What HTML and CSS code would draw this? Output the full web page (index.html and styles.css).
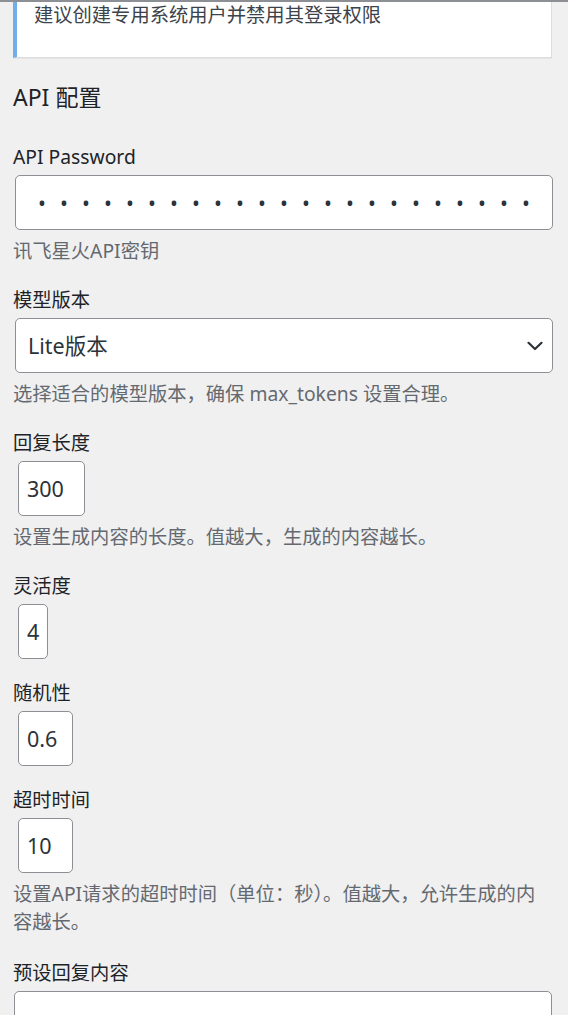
FILE: index.html
```html
<!DOCTYPE html>
<html lang="zh-CN">
<head>
<meta charset="utf-8">
<meta name="viewport" content="width=device-width, initial-scale=1">
<title>API 配置</title>
<link rel="stylesheet" href="styles.css">
</head>
<body>
<div class="topbar"></div>
<div class="wrap">
  <div class="notice"><p>建议创建专用系统用户并禁用其登录权限</p></div>
  <h2 class="section-title">API 配置</h2>
  <div class="fields">
    <div class="field">
      <label class="field-label" for="api-password">API Password</label>
      <input id="api-password" class="input input-full input-password" type="password" value="abcdefghijklmnopqrstuvw">
      <p class="description">讯飞星火API密钥</p>
    </div>
    <div class="field">
      <label class="field-label" for="model">模型版本</label>
      <div class="select-wrap">
        <select id="model" class="input select">
          <option>Lite版本</option>
        </select>
        <svg class="chevron" width="16" height="10" viewBox="0 0 16 10" aria-hidden="true"><polyline points="1.5,1.8 8,8 14.5,1.8" fill="none" stroke="#2c3338" stroke-width="2.2" stroke-linecap="round" stroke-linejoin="round"/></svg>
      </div>
      <p class="description">选择适合的模型版本，确保 max_tokens 设置合理。</p>
    </div>
    <div class="field">
      <label class="field-label" for="max-tokens">回复长度</label>
      <input id="max-tokens" class="input num num-lg" type="number" value="300">
      <p class="description">设置生成内容的长度。值越大，生成的内容越长。</p>
    </div>
    <div class="field">
      <label class="field-label" for="top-k">灵活度</label>
      <input id="top-k" class="input num num-xs" type="number" value="4">
    </div>
    <div class="field">
      <label class="field-label" for="temperature">随机性</label>
      <input id="temperature" class="input num num-md" type="number" value="0.6">
    </div>
    <div class="field">
      <label class="field-label" for="timeout">超时时间</label>
      <input id="timeout" class="input num num-md" type="number" value="10">
      <p class="description description-long">设置API请求的超时时间（单位：秒）。值越大，允许生成的内容越长。</p>
    </div>
    <div class="field">
      <label class="field-label" for="preset">预设回复内容</label>
      <textarea id="preset" class="input input-full textarea" rows="5"></textarea>
    </div>
  </div>
</div>
</body>
</html>
```

FILE: styles.css
```css
* { box-sizing: border-box; }

html { background: #fff; }

body {
  margin: 0;
  height: 1015px;
  overflow: hidden;
  background: #f0f0f1;
  font-family: "Noto Sans", "Noto Sans CJK SC", sans-serif;
  color: #1d2327;
}

.topbar {
  height: 2px;
  background: #8c8f94;
}

.wrap {
  padding: 0 14px 0 13px;
}

.notice {
  background: #fff;
  border-left: 4px solid #72aee6;
  border-right: 1px solid #dcdcde;
  border-bottom: 1px solid #dcdcde;
  box-shadow: 0 1px 1px rgba(0, 0, 0, .04);
  margin-right: 2px;
  padding: 0 15px 29px 17px;
}

.notice p {
  margin: 0;
  font-size: 19.3px;
  line-height: 26px;
  color: #3c434a;
}

.section-title {
  margin: 24px 0 0;
  font-size: 23px;
  font-weight: 400;
  line-height: 30px;
  color: #1d2327;
}

.fields {
  display: flex;
  flex-direction: column;
  gap: 21px;
  margin-top: 32px;
}

.field-label {
  display: block;
  font-size: 19.3px;
  line-height: 26px;
  margin-bottom: 5px;
  color: #1d2327;
}

.input {
  display: block;
  margin: 0;
  height: 55px;
  padding: 0 10px;
  font-family: inherit;
  font-size: 21.5px;
  color: #2c3338;
  background: #fff;
  border: 1px solid #8c8f94;
  border-radius: 5px;
  outline: none;
  box-shadow: none;
}

.input-full {
  width: calc(100% - 3px);
  margin-left: 2px;
}

.input-password {
  font-size: 21px;
  padding-left: 22px;
  letter-spacing: 14.1px;
}

.select-wrap {
  position: relative;
  width: calc(100% - 3px);
  margin-left: 2px;
}

.select {
  width: 100%;
  padding-left: 12px;
  -webkit-appearance: none;
  appearance: none;
}

.chevron {
  position: absolute;
  right: 10px;
  top: 50%;
  transform: translateY(-50%);
  pointer-events: none;
}

.num {
  margin-left: 5px;
  padding: 0 0 0 8px;
  -moz-appearance: textfield;
  appearance: textfield;
}

.num::-webkit-inner-spin-button,
.num::-webkit-outer-spin-button {
  -webkit-appearance: none;
  margin: 0;
}

.num-lg { width: 67px; }
.num-xs { width: 30px; }
.num-md { width: 55px; }

.textarea {
  height: 120px;
  margin-left: 1px;
  resize: none;
}

.description {
  margin: 7px 0 1px;
  font-size: 19.3px;
  line-height: 28px;
  color: #646970;
}

.description-long {
  margin-bottom: 3px;
}
```
